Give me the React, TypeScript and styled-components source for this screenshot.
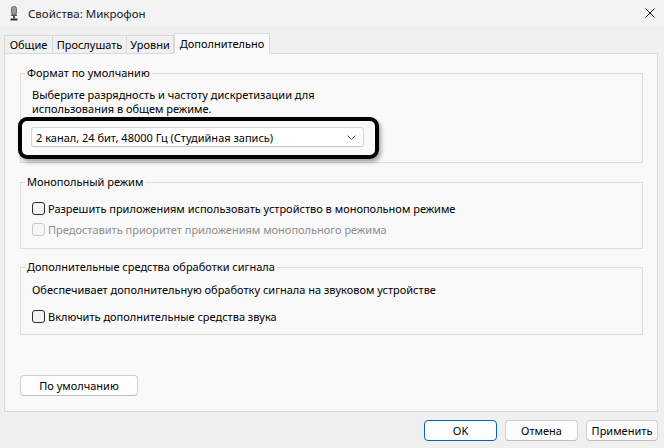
import React from "react";
import styled, { createGlobalStyle } from "styled-components";

const Global = createGlobalStyle`
  html, body { margin: 0; padding: 0; }
  body {
    width: 664px; height: 448px; overflow: hidden; background: #f0f0f0;
    font-family: "Noto Sans", "Segoe UI", sans-serif; font-size: 11px; color: #000;
  }
  * { box-sizing: border-box; }
`;

const Window = styled.div`
  width: 664px; height: 448px; display: flex; flex-direction: column; background: #f0f0f0;
`;

const TitleBar = styled.div`
  height: 26px; display: flex; align-items: center; padding-left: 10px; background: #f3f3f3;
`;

const TitleText = styled.span`
  margin-left: 10px; font-size: 11.5px; color: #1a1a1a;
`;

const CloseBtn = styled.div`
  margin-left: auto; width: 28px; height: 26px; display: flex; align-items: center; justify-content: center;
`;

const Body = styled.div`
  padding: 7px 6px 0 4px; display: flex; flex-direction: column;
`;

const TabRow = styled.div`
  display: flex; align-items: flex-start; height: 21px; margin-bottom: -1px; position: relative; z-index: 1;
`;

const Tab = styled.div<{ $active?: boolean; $w: number }>`
  width: ${(p) => p.$w}px;
  height: ${(p) => (p.$active ? 21 : 18)}px;
  margin-top: ${(p) => (p.$active ? 0 : 2)}px;
  margin-left: ${(p) => (p.$active ? 1 : 0)}px;
  margin-right: -1px;
  border: 1px solid #d9d9d9; border-bottom: none;
  background: ${(p) => (p.$active ? "#f9f9f9" : "#f0f0f0")};
  display: flex; align-items: center; justify-content: center;
  padding-bottom: ${(p) => (p.$active ? 2 : 0)}px;
  white-space: nowrap;
`;

const Panel = styled.div`
  height: 359px; border: 1px solid #d9d9d9; background: #f9f9f9;
  padding: 11px 14px 0 15px; display: flex; flex-direction: column;
`;

const Group = styled.fieldset<{ $mt: number }>`
  margin: ${(p) => p.$mt}px 0 0 0; padding: 0 0 0 4px; min-width: 0;
  border: 1px solid #dcdcdc; border-radius: 0;
`;

const Legend = styled.legend`
  padding: 0 2px; line-height: 16px; font-size: 11px;
`;

const GroupBody = styled.div<{ $pt: number; $pb: number }>`
  padding: ${(p) => p.$pt}px 0 ${(p) => p.$pb}px 7px;
  display: flex; flex-direction: column;
`;

const Text = styled.div<{ $lh: number }>`
  line-height: ${(p) => p.$lh}px; white-space: nowrap;
`;

const Highlight = styled.div`
  margin: 1px 0 0 -14px; width: 361px; height: 42px;
  border: 4px solid #000; border-radius: 9px;
  padding: 6px 11px 8px 9px;
  box-shadow: 2px 3px 4px rgba(0, 0, 0, 0.35);
`;

const Select = styled.div`
  height: 20px; width: 333px; background: #fff;
  border: 1px solid #d5d5d5; border-bottom-color: #c4c4c4; border-radius: 3px;
  display: flex; align-items: center; padding: 0 7px 0 4px;
  justify-content: space-between; white-space: nowrap;
`;

const CheckRow = styled.div<{ $disabled?: boolean; $mt?: number }>`
  height: 21px; display: flex; align-items: center; gap: 3px;
  margin-top: ${(p) => p.$mt ?? 0}px;
  color: ${(p) => (p.$disabled ? "#8e8e8e" : "#000")};
  white-space: nowrap;
`;

const Box = styled.span<{ $disabled?: boolean }>`
  width: 13px; height: 13px; border-radius: 3px; flex: none;
  border: 1px solid ${(p) => (p.$disabled ? "#c9c9c9" : "#2b2b2b")};
  background: ${(p) => (p.$disabled ? "#f7f7f7" : "#f4f4f4")};
`;

const Button = styled.div<{ $w: number; $primary?: boolean }>`
  width: ${(p) => p.$w}px; height: 21px; border-radius: 4px;
  border: 1px solid ${(p) => (p.$primary ? "#0067c0" : "#d0d0d0")};
  border-bottom-color: ${(p) => (p.$primary ? "#0067c0" : "#bdbdbd")};
  background: #fdfdfd;
  display: flex; align-items: center; justify-content: center; white-space: nowrap;
`;

const DefaultButton = styled(Button)`
  margin-top: 40px;
`;

const Footer = styled.div`
  margin-top: 8px; display: flex; justify-content: flex-end; gap: 8px;
`;

const MicIcon = () => (
  <svg width="8" height="15" viewBox="0 0 8 15">
    <rect x="1.5" y="0.5" width="5" height="8" rx="2" fill="#9a9a9a" stroke="#6a6a6a" />
    <rect x="1" y="8.5" width="6" height="1.5" fill="#555" />
    <rect x="3" y="10" width="2" height="2.5" fill="#555" />
    <rect x="0.5" y="12.5" width="7" height="2" rx="0.5" fill="#333" />
  </svg>
);

const CloseIcon = () => (
  <svg width="10" height="10" viewBox="0 0 10 10">
    <path d="M0.5 0.5 L9.5 9.5 M9.5 0.5 L0.5 9.5" stroke="#1a1a1a" strokeWidth="1" />
  </svg>
);

const Chevron = () => (
  <svg width="9" height="5" viewBox="0 0 9 5">
    <path d="M0.5 0.5 L4.5 4.5 L8.5 0.5" stroke="#606060" strokeWidth="1" fill="none" />
  </svg>
);

export default function App() {
  return (
    <>
      <Global />
      <Window>
        <TitleBar>
          <MicIcon />
          <TitleText>Свойства: Микрофон</TitleText>
          <CloseBtn>
            <CloseIcon />
          </CloseBtn>
        </TitleBar>
        <Body>
          <TabRow>
            <Tab $w={49}>Общие</Tab>
            <Tab $w={75}>Прослушать</Tab>
            <Tab $w={48}>Уровни</Tab>
            <Tab $w={96} $active>Дополнительно</Tab>
          </TabRow>
          <Panel>
            <Group $mt={0}>
              <Legend>Формат по умолчанию</Legend>
              <GroupBody $pt={7} $pb={3}>
                <Text $lh={14}>Выберите разрядность и частоту дискретизации для</Text>
                <Text $lh={14}>использования в общем режиме.</Text>
                <Highlight>
                  <Select>
                    <span>2 канал, 24 бит, 48000 Гц (Студийная запись)</span>
                    <Chevron />
                  </Select>
                </Highlight>
              </GroupBody>
            </Group>
            <Group $mt={11}>
              <Legend>Монопольный режим</Legend>
              <GroupBody $pt={8} $pb={8}>
                <CheckRow>
                  <Box />
                  Разрешить приложениям использовать устройство в монопольном режиме
                </CheckRow>
                <CheckRow $disabled>
                  <Box $disabled />
                  Предоставить приоритет приложениям монопольного режима
                </CheckRow>
              </GroupBody>
            </Group>
            <Group $mt={10}>
              <Legend>Дополнительные средства обработки сигнала</Legend>
              <GroupBody $pt={7} $pb={7}>
                <Text $lh={16}>Обеспечивает дополнительную обработку сигнала на звуковом устройстве</Text>
                <CheckRow $mt={8}>
                  <Box />
                  Включить дополнительные средства звука
                </CheckRow>
              </GroupBody>
            </Group>
            <DefaultButton $w={118}>По умолчанию</DefaultButton>
          </Panel>
          <Footer>
            <Button $w={73} $primary>OK</Button>
            <Button $w={73}>Отмена</Button>
            <Button $w={72}>Применить</Button>
          </Footer>
        </Body>
      </Window>
    </>
  );
}
